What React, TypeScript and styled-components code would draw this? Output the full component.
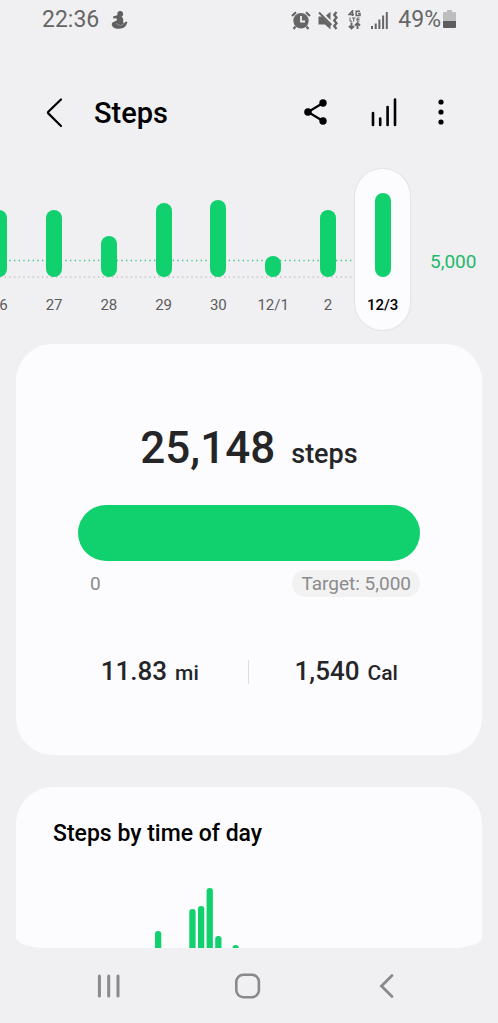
import React from "react";
import styled, { createGlobalStyle } from "styled-components";

const green = "#11d16f";

const GlobalStyle = createGlobalStyle`
  * { box-sizing: border-box; }
  body { margin: 0; background: #f0f0f2; font-family: Roboto, sans-serif; color: #000; }
  button { border: 0; padding: 0; background: none; font: inherit; color: inherit; cursor: pointer; }
  h1, h2, p { margin: 0; font-weight: 500; }
  svg { display: block; }
`;

const Page = styled.div`
  display: flex;
  flex-direction: column;
  min-height: 100vh;
  overflow: hidden;
`;

const StatusBar = styled.div`
  display: flex;
  align-items: center;
  justify-content: space-between;
  height: 40px;
  padding: 0 41px 0 42px;
  font-size: 23px;
  line-height: 28px;
  color: #666;
`;

const StatusGroup = styled.div<{ $gap: number }>`
  display: flex;
  align-items: center;
  gap: ${(p) => p.$gap}px;
`;

const Header = styled.header`
  display: flex;
  align-items: center;
  height: 72px;
  margin-top: 37px;
  padding: 0 43px 0 40px;
`;

const IconButton = styled.button`
  display: flex;
  align-items: center;
  justify-content: center;
  width: 28px;
  height: 44px;
`;

const Title = styled.h1`
  flex: 1;
  margin-left: 26px;
  font-size: 29px;
  line-height: 32px;
`;

const Actions = styled.div<{ $gap: number }>`
  display: flex;
  gap: ${(p) => p.$gap}px;
`;

const Week = styled.section`
  display: flex;
  height: 161px;
  margin-top: 20px;
`;

const Days = styled.div`
  position: relative;
  display: flex;
  flex: 1;
  margin-left: -28px;
`;

const GuideLines = styled.svg`
  position: absolute;
  left: 28px;
  top: 0;
  width: calc(100% - 86px);
  height: 120px;
`;

const Day = styled.button<{ $selected?: boolean }>`
  position: relative;
  display: flex;
  flex: 1 1 0;
  min-width: 0;
  flex-direction: column;
  align-items: center;
  font-size: 15px;
  line-height: 20px;
  color: ${(p) => (p.$selected ? "#000" : "#5c5c5e")};
  font-weight: ${(p) => (p.$selected ? 500 : 400)};
  background: ${(p) => (p.$selected ? "#fcfcfe" : "none")};
  border-radius: 30px;
  box-shadow: ${(p) => (p.$selected ? "0 0 0 1px #e4e4e6" : "none")};
`;

const DayPlot = styled.span`
  display: flex;
  align-items: flex-end;
  height: 108px;
  margin-bottom: 18px;
`;

const DayBar = styled.span<{ $height: number }>`
  width: 16px;
  height: ${(p) => p.$height}px;
  border-radius: 8px;
  background: ${green};
`;

const GoalLabel = styled.div`
  width: 88px;
  padding: 81px 0 0 20px;
  font-size: 19px;
  line-height: 24px;
  color: #1fb96c;
`;

const Card = styled.section`
  margin: 14px 16px 0;
  padding: 74px 0 66px;
  border-radius: 37px;
  background: #fcfcfe;
  color: #252528;
`;

const Total = styled.p`
  display: flex;
  align-items: baseline;
  justify-content: center;
  gap: 16px;
  font-size: 44px;
  line-height: 60px;
`;

const TotalUnit = styled.span`
  font-size: 27px;
`;

const Progress = styled.div`
  height: 56px;
  margin: 21px 62px 0;
  border-radius: 28px;
  overflow: hidden;
  background: #f1f1f2;
`;

const ProgressFill = styled.div`
  height: 100%;
  background: ${green};
`;

const Scale = styled.div`
  display: flex;
  align-items: center;
  justify-content: space-between;
  margin: 9px 62px 0;
  padding-left: 12px;
  font-size: 19px;
  line-height: 27px;
  color: #8b8b8d;
`;

const Target = styled.span`
  padding: 0 9px;
  border-radius: 14px;
  background: #f2f2f3;
`;

const Metrics = styled.div`
  display: grid;
  grid-template-columns: 1fr 1px 1fr;
  align-items: center;
  margin-top: 58px;
  padding: 0 38px 0 36px;
`;

const Metric = styled.p`
  display: flex;
  align-items: baseline;
  justify-content: center;
  gap: 8px;
  font-size: 26px;
  line-height: 32px;
`;

const MetricUnit = styled.span`
  font-size: 21px;
`;

const Divider = styled.span`
  height: 24px;
  background: #dcdcde;
`;

const HourlyCard = styled.section`
  flex: 1;
  margin: 32px 16px 0;
  padding: 32px 37px 0;
  border-radius: 37px 37px 30px 30px / 37px 37px 11px 11px;
  background: #fcfcfe;
`;

const HourlyTitle = styled.h2`
  font-size: 23px;
  line-height: 30px;
`;

const HourlyChart = styled.svg`
  width: 100%;
  height: 61px;
  margin-top: 38px;
`;

const SystemNav = styled.nav`
  display: flex;
  justify-content: space-between;
  align-items: center;
  height: 75px;
  padding: 0 97px 0 95px;
`;

const week = [
  { label: "26", height: 67 },
  { label: "27", height: 67 },
  { label: "28", height: 41 },
  { label: "29", height: 74 },
  { label: "30", height: 77 },
  { label: "12/1", height: 21 },
  { label: "2", height: 67 },
  { label: "12/3", height: 84, selected: true },
];

const hours = [
  { x: 102, height: 17 },
  { x: 136.3, height: 39 },
  { x: 145, height: 42 },
  { x: 153.6, height: 60 },
  { x: 162.2, height: 12 },
  { x: 179.5, height: 3 },
];

const FitnessIcon = () => (
  <svg width="17" height="19" viewBox="0 0 17 19" fill="#5f5f5f">
    <circle cx="9.200" cy="3" r="2.900" />
    <path d="M7 4 2 5.500 2.400 7.600 5.500 7.200 6 9.200 1.500 11.500C0 13 .8 16 4 17.200c4 1.200 9 .5 11-2.700l1.500-3.500-1.600-.5-2.200 2.300-.5-2.300V8.500C12.200 6.500 10.500 5.500 8.500 5.200Z" />
    <path d="m5 12.500 4.500 2 3-1.500" fill="none" stroke="#a4a4a5" strokeWidth="0.700" />
  </svg>
);

const AlarmIcon = () => (
  <svg width="20" height="19" viewBox="0 0 20 19">
    <circle cx="10" cy="9.800" r="7.700" fill="#666" />
    <path d="M1 5 5 1.300M19 5l-4-3.700M4.500 15.500 2.500 18M15.500 15.500l2 2.500" stroke="#666" strokeWidth="2.200" />
    <path d="M10 5v5.500h4" fill="none" stroke="#f0f0f2" strokeWidth="1.800" />
  </svg>
);

const MuteIcon = () => (
  <svg width="20" height="19" viewBox="0 0 20 19">
    <path d="M.5 5.500H4L12.500 14v4.500L7 13.500H.5ZM8 4.500 12.500 .8V9Z" fill="#666" />
    <path d="m1 1.500 12.500 12.500" stroke="#666" strokeWidth="1.900" />
    <path d="m18.500 1-2.300 2.800 2.300 2.800-2.300 2.800 2.300 2.800-2.300 2.800 2.300 3" fill="none" stroke="#666" strokeWidth="2.300" />
  </svg>
);

const NetworkIcon = () => (
  <svg width="13" height="20" viewBox="0 0 13 20" fill="none" stroke="#666">
    <path d="M4.500 6V.8L1 4.500h5M12 1.300H8.200v4.200H12V3.500h-2" strokeWidth="1.500" />
    <path d="M2 7.500v3.700h2.200M4 8h3.500M5.700 8v3.500M11.500 8H9v3.200h2.500M9 9.600h2.500" strokeWidth="1" />
    <path d="M3.500 12.500v6M1 16l2.500 2.500L6 16M9.500 19v-6M7 15.500 9.500 13l2.500 2.500" strokeWidth="1.900" />
  </svg>
);

const SignalIcon = () => (
  <svg width="17" height="18" viewBox="0 0 17 18" stroke="#666" strokeWidth="2">
    <path d="M1 15v3M4.700 12.500V18M8.400 8.500V18M12.100 4.500V18M15.800 1v17" />
  </svg>
);

const BatteryIcon = () => (
  <svg width="14" height="20" viewBox="0 0 14 20">
    <path d="M4 0h5v2h3q1 0 1 1v8H0V3q0-1 1-1h3Z" fill="#bdbdbe" />
    <path d="M0 11h13v6q0 1-1 1H1q-1 0-1-1Z" fill="#5c5c5c" />
  </svg>
);

const BackIcon = () => (
  <svg width="28" height="32" viewBox="0 0 28 32" fill="none" stroke="#000" strokeWidth="2.200" strokeLinecap="round" strokeLinejoin="round">
    <path d="M21 2.500 8.300 14.800q-.8.800 0 1.600L21 29" />
  </svg>
);

const ShareIcon = () => (
  <svg width="28" height="30" viewBox="0 0 28 30">
    <path d="M21 5 6 14l15 9" fill="none" stroke="#000" strokeWidth="2.200" />
    <circle cx="21" cy="5" r="3.700" />
    <circle cx="6" cy="14" r="3.800" />
    <circle cx="21" cy="23" r="3.700" />
  </svg>
);

const ChartIcon = () => (
  <svg width="28" height="32" viewBox="0 0 28 32" stroke="#000" strokeWidth="2.600" strokeLinecap="round">
    <path d="M3 16v12M10.200 21.500V28M17.600 10v18M25 2.500V28" />
  </svg>
);

const MoreIcon = () => (
  <svg width="28" height="30" viewBox="0 0 28 30">
    <circle cx="14" cy="4" r="2.600" />
    <circle cx="14" cy="14" r="2.600" />
    <circle cx="14" cy="24" r="2.600" />
  </svg>
);

const RecentsIcon = () => (
  <svg width="28" height="28" viewBox="0 0 28 28" stroke="#8a8a8c" strokeWidth="3" strokeLinecap="round">
    <path d="M4.400 4v20M13.700 4v20M23 4v20" />
  </svg>
);

const HomeIcon = () => (
  <svg width="28" height="28" viewBox="0 0 28 28" fill="none" stroke="#8a8a8c" strokeWidth="2.600">
    <rect x="2.300" y="2.800" width="22.600" height="22.400" rx="7" />
  </svg>
);

const NavBackIcon = () => (
  <svg width="28" height="28" viewBox="0 0 28 28" fill="none" stroke="#8a8a8c" strokeWidth="2.800" strokeLinecap="round">
    <path d="M19 3.500 8.500 14 19 24.500" />
  </svg>
);

export default function App() {
  return (
    <Page>
      <GlobalStyle />
      <StatusBar>
        <StatusGroup $gap={12}>
          <span>22:36</span>
          <FitnessIcon />
        </StatusGroup>
        <StatusGroup $gap={10}>
          <StatusGroup $gap={7}>
            <AlarmIcon />
            <MuteIcon />
          </StatusGroup>
          <NetworkIcon />
          <SignalIcon />
          <StatusGroup $gap={2}>
            <span>49%</span>
            <BatteryIcon />
          </StatusGroup>
        </StatusGroup>
      </StatusBar>

      <Header>
        <IconButton aria-label="Back"><BackIcon /></IconButton>
        <Title>Steps</Title>
        <Actions $gap={29}>
          <Actions $gap={40}>
            <IconButton aria-label="Share"><ShareIcon /></IconButton>
            <IconButton aria-label="Trends"><ChartIcon /></IconButton>
          </Actions>
          <IconButton aria-label="More options"><MoreIcon /></IconButton>
        </Actions>
      </Header>

      <Week>
        <Days>
          <GuideLines aria-hidden="true">
            <line x1="0" x2="100%" y1="91.500" y2="91.500" stroke="#3cc486" strokeWidth="1.300" strokeDasharray="1.300 3.367" />
            <line x1="0" x2="100%" y1="108" y2="108" stroke="#c2c2c4" strokeWidth="1.300" strokeDasharray="1.300 3.367" />
          </GuideLines>
          {week.map((day) => (
            <Day key={day.label} $selected={day.selected} aria-pressed={!!day.selected}>
              <DayPlot><DayBar $height={day.height} /></DayPlot>
              {day.label}
            </Day>
          ))}
        </Days>
        <GoalLabel>5,000</GoalLabel>
      </Week>

      <Card>
        <Total>25,148 <TotalUnit>steps</TotalUnit></Total>
        <Progress role="progressbar" aria-label="Steps towards target" aria-valuemin={0} aria-valuemax={5000} aria-valuenow={5000}>
          <ProgressFill />
        </Progress>
        <Scale>
          <span>0</span>
          <Target>Target: 5,000</Target>
        </Scale>
        <Metrics>
          <Metric>11.83 <MetricUnit>mi</MetricUnit></Metric>
          <Divider />
          <Metric>1,540 <MetricUnit>Cal</MetricUnit></Metric>
        </Metrics>
      </Card>

      <HourlyCard>
        <HourlyTitle>Steps by time of day</HourlyTitle>
        <HourlyChart role="img" aria-label="Steps for each hour">
          {hours.map((hour) => (
            <rect key={hour.x} x={hour.x} y={61 - hour.height} width="6.300" height={hour.height + 8} rx="3" fill={green} />
          ))}
        </HourlyChart>
      </HourlyCard>

      <SystemNav aria-label="System">
        <IconButton aria-label="Recent apps"><RecentsIcon /></IconButton>
        <IconButton aria-label="Home"><HomeIcon /></IconButton>
        <IconButton aria-label="Back to previous app"><NavBackIcon /></IconButton>
      </SystemNav>
    </Page>
  );
}
